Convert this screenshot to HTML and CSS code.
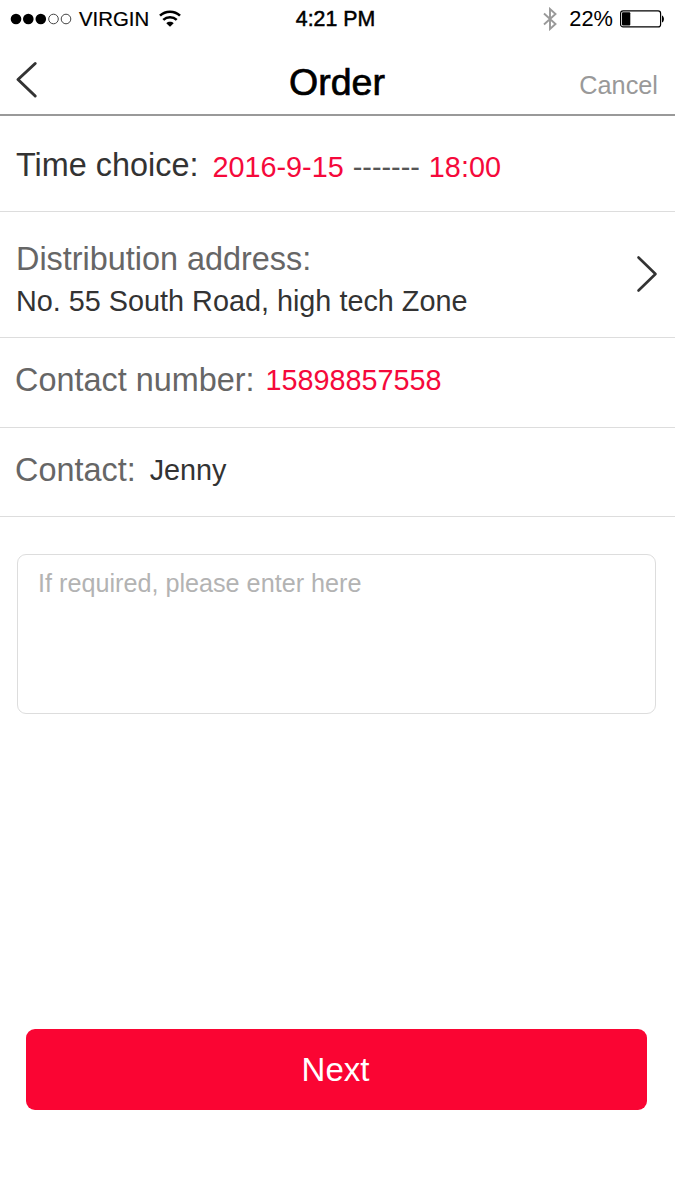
FILE: index.html
```html
<!DOCTYPE html>
<html lang="en">

<head>
    <meta charset="UTF-8">
    <meta name="viewport" content="width=device-width, initial-scale=1.0">
    <title>Order</title>
    <link rel="stylesheet" href="styles.css">
</head>

<body>
    <div class="statusBar">
        <div class="carrier">
            <svg class="signal" width="62" height="12" viewBox="0 0 62 12">
                <circle cx="6" cy="6" r="5.3" />
                <circle cx="18.3" cy="6" r="5.3" />
                <circle cx="30.8" cy="6" r="5.3" />
                <circle class="empty" cx="43.5" cy="6" r="4.8" />
                <circle class="empty" cx="56" cy="6" r="4.8" />
            </svg>
            <span class="virgin">VIRGIN</span>
            <svg class="wifi" width="22" height="17" viewBox="0 0 22 17">
                <path d="M1 5.6C6.5.4 15.500.4 21 5.6" />
                <path d="M4.300 9.900C8 6.400 14 6.400 17.700 9.900" />
                <path class="dot" d="M7.300 13.200C9.300 11.300 12.700 11.300 14.700 13.200L11 16.800Z" />
            </svg>
        </div>
        <span class="time">4:21 PM</span>
        <div class="power">
            <svg class="bluetooth" width="14" height="24" viewBox="0 0 14 24">
                <path d="M1 6.500L12.500 17L7 22V2L12.500 7L1 17.500" />
            </svg>
            <span class="percent">22%</span>
            <svg class="battery" width="45" height="18" viewBox="0 0 45 18">
                <rect class="case" x=".6" y=".9" width="40" height="16" rx="2.500" />
                <rect x="2" y="2.200" width="8.300" height="13.400" rx="1" />
                <path d="M42 5.500C44.600 6.500 44.600 11.500 42 12.500Z" />
            </svg>
        </div>
    </div>
    <div class="header">
        <svg class="back" width="24" height="38" viewBox="0 0 24 38">
            <path d="M20.200 2.500L3 18.500L20.200 35" />
        </svg>
        <h1 class="title">Order</h1>
        <span class="cancel">Cancel</span>
    </div>
    <div class="row timeRow">
        <span class="label dark">Time choice:</span>
        <span class="value red">2016-9-15 <span class="dash">-------</span> 18:00</span>
    </div>
    <div class="row addressRow">
        <div class="address">
            <div class="label">Distribution address:</div>
            <div class="value">No. 55 South Road, high tech Zone</div>
        </div>
        <svg class="arrow" width="24" height="40" viewBox="0 0 24 40">
            <path d="M3.500 3.500L20.500 20L3.500 36.500" />
        </svg>
    </div>
    <div class="row numberRow">
        <span class="label">Contact number:</span>
        <span class="value red">15898857558</span>
    </div>
    <div class="row contactRow">
        <span class="label">Contact:</span>
        <span class="value">Jenny</span>
    </div>
    <textarea class="note" placeholder="If required, please enter here"></textarea>
    <button class="nextBtn">Next</button>
</body>

</html>
```
FILE: styles.css
```css
* {
    box-sizing: border-box;
}

body {
    margin: 0;
    height: 1200px;
    display: flex;
    flex-direction: column;
    overflow: hidden;
    background-color: #fff;
    font-family: "Liberation Sans", Arial, sans-serif;
    color: #333;
}

svg {
    flex: none;
}

.statusBar {
    display: grid;
    grid-template-columns: 1fr auto 1fr;
    align-items: center;
    height: 38px;
    padding: 0 10px;
    color: #000;
    line-height: 38px;
}

.carrier,
.power {
    display: flex;
    align-items: center;
}

.power {
    justify-content: flex-end;
}

.empty {
    fill: none;
    stroke: #444;
    stroke-width: 1;
}

.virgin {
    margin-left: 7px;
    font-size: 20.4px;
    -webkit-text-stroke: 0.2px #000;
}

.wifi {
    margin-left: 10px;
    margin-top: -2px;
    fill: none;
    stroke: #000;
    stroke-width: 2.6;
}

.wifi .dot {
    fill: #000;
    stroke: none;
}

.time {
    margin-right: 4px;
    font-size: 21.3px;
    -webkit-text-stroke: 0.5px #000;
}

.bluetooth {
    margin-right: 12px;
    fill: none;
    stroke: #999;
    stroke-width: 1.9;
}

.percent {
    font-size: 21.8px;
}

.battery {
    margin-left: 7px;
}

.case {
    fill: none;
    stroke: #000;
    stroke-width: 1.2;
}

.header {
    display: grid;
    grid-template-columns: 1fr auto 1fr;
    align-items: start;
    height: 78px;
    padding: 0 17px 0 15px;
    border-bottom: 2px solid #999;
}

.back {
    margin-top: 23px;
    fill: none;
    stroke: #333;
    stroke-width: 3;
    stroke-linecap: round;
    stroke-linejoin: round;
}

.title {
    margin: 19px 0 0 1px;
    color: #000;
    font-size: 37.5px;
    font-weight: normal;
    line-height: 50px;
    -webkit-text-stroke: 0.7px #000;
}

.cancel {
    margin-top: 27px;
    justify-self: end;
    color: #999;
    font-size: 25.3px;
    line-height: 40px;
}

.row {
    display: flex;
    align-items: flex-start;
    padding: 22px 16px 0 15px;
    border-bottom: 1px solid #ddd;
    line-height: 40px;
}

.label {
    color: #666;
    font-size: 32.4px;
}

.value {
    font-size: 28.8px;
}

.dark {
    color: #333;
}

.red {
    color: #f5093b;
}

.dash {
    margin: 0 1px;
    color: #555;
}

.timeRow {
    height: 96px;
    padding-top: 29px;
    padding-left: 16px;
}

.timeRow .value {
    margin: 2px 0 0 14px;
}

.addressRow {
    height: 126px;
    padding-top: 27px;
    padding-left: 16px;
    justify-content: space-between;
}

.address .value {
    margin-top: 2px;
}

.arrow {
    margin-top: 15px;
    fill: none;
    stroke: #333;
    stroke-width: 2.6;
    stroke-linecap: round;
    stroke-linejoin: round;
}

.numberRow {
    height: 90px;
}

.contactRow {
    height: 89px;
}

.numberRow .value {
    margin-left: 11px;
}

.contactRow .value {
    margin-left: 14px;
}

.note {
    flex: none;
    height: 160px;
    margin: 37px 19px 0 17px;
    padding: 8px 20px;
    border: 1px solid #ddd;
    border-radius: 9px;
    outline: none;
    resize: none;
    font-family: inherit;
    font-size: 25.2px;
    line-height: 40px;
}

.note::placeholder {
    color: #b3b3b3;
}

.nextBtn {
    flex: none;
    height: 81px;
    margin: 315px 28px 0 26px;
    padding: 1px 2px 0 0;
    border: none;
    border-radius: 9px;
    background-color: #fa0533;
    color: #fff;
    font-family: inherit;
    font-size: 33px;
    cursor: pointer;
}
```
